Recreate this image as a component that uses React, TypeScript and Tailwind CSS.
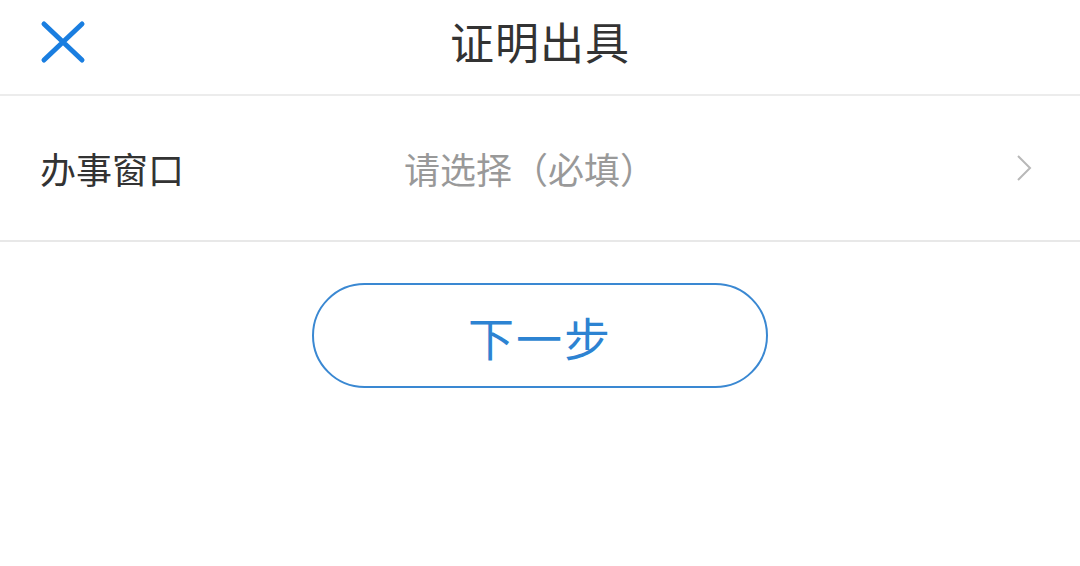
import React from "react";

export default function App() {
  const font = { fontFamily: '"Noto Sans CJK SC", "Noto Sans", sans-serif' };
  return (
    <div className="w-[1080px] h-[566px] bg-white overflow-hidden" style={font}>
      <div className="relative h-[96px] flex items-center justify-center pb-[12px] border-b-[2px] border-[#ececec]">
        <svg
          className="absolute left-[40px] top-[20px]"
          width="46"
          height="44"
          viewBox="0 0 46 44"
        >
          <path d="M4 4 L42 40 M42 4 L4 40" stroke="#1a7ee0" strokeWidth="5" strokeLinecap="round" fill="none" />
        </svg>
        <span className="text-[44px] leading-none text-[#333] tracking-[1px]">证明出具</span>
      </div>
      <div className="h-[146px] flex items-center pl-[40px] pr-[48px] border-b-[2px] border-[#e8e8e8]">
        <span className="w-[364px] text-[36px] leading-none text-[#333]">办事窗口</span>
        <span className="flex-1 text-[36px] leading-none text-[#999]">请选择（必填）</span>
        <svg width="16" height="28" viewBox="0 0 16 28">
          <path d="M2 2 L14 14 L2 26" stroke="#b8b8b8" strokeWidth="2" fill="none" />
        </svg>
      </div>
      <div className="flex justify-center pt-[41px]">
        <button className="w-[456px] h-[105px] rounded-full border-[2px] border-[#3a88d2] text-[#2d83d2] text-[46px] leading-none flex items-center justify-center tracking-[2px]">
          下一步
        </button>
      </div>
    </div>
  );
}
